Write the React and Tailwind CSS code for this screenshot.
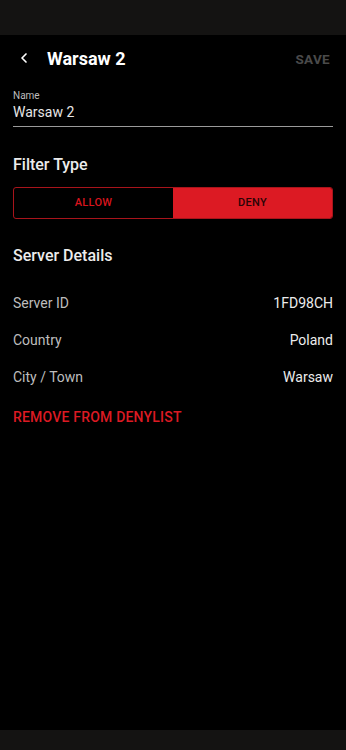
import { ChevronLeft } from 'lucide-react'

function DetailRow({ label, value }) {
  return (
    <div className="flex items-center justify-between h-[37px]">
      <span className="text-[14px] text-[#bdbdbd]">{label}</span>
      <span className="text-[14px] text-[#ececec]">{value}</span>
    </div>
  )
}

export default function App() {
  return (
    <div className="w-[346px] h-[750px] bg-black flex flex-col font-['Roboto',sans-serif]">
      <div className="h-[35px] bg-[#141312]" />

      <main className="flex-1 px-[13px]">
        {/* Header */}
        <div className="flex items-center h-[46px]">
          <ChevronLeft size={16} strokeWidth={2.5} className="text-white ml-[3px]" />
          <h1 className="ml-[15px] text-[18px] font-bold text-white">Warsaw 2</h1>
          <span className="ml-auto mr-[3px] mt-[2px] text-[13.5px] font-bold tracking-wide text-[#4a4a4a]">SAVE</span>
        </div>

        {/* Name field */}
        <div className="mt-[9px]">
          <p className="text-[10px] text-[#bdbdbd] leading-[12px]">Name</p>
          <p className="text-[14px] text-[#e6e6e6] leading-[18px] mt-[1px] pb-[5px] border-b border-[#9a9a9a]">Warsaw 2</p>
        </div>

        {/* Filter type */}
        <h2 className="mt-[28px] text-[16px] font-medium text-[#ececec] leading-[20px]">Filter Type</h2>
        <div className="mt-[12px] flex h-[32px] rounded-[3px] border border-[#a8141b] overflow-hidden">
          <button className="flex-1 text-[11px] font-medium tracking-wide text-[#d8141d]">ALLOW</button>
          <button className="flex-1 bg-[#dc1a23] text-[11px] font-medium tracking-wide text-[#2a0406]">DENY</button>
        </div>

        {/* Server details */}
        <h2 className="mt-[27px] text-[16px] font-medium text-[#ececec] leading-[20px]">Server Details</h2>
        <div className="mt-[19px]">
          <DetailRow label="Server ID" value="1FD98CH" />
          <DetailRow label="Country" value="Poland" />
          <DetailRow label="City / Town" value="Warsaw" />
        </div>

        <button className="mt-[11px] text-[14px] font-medium tracking-[0.2px] text-[#dc1a23]">REMOVE FROM DENYLIST</button>
      </main>

      <div className="h-[20px] bg-[#141312]" />
    </div>
  )
}
